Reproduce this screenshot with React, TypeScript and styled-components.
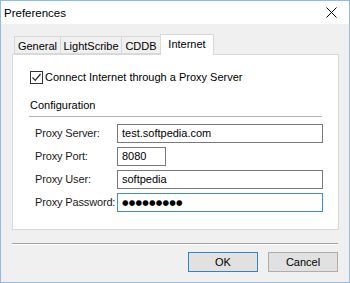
import styled, { createGlobalStyle } from "styled-components";

const GlobalStyle = createGlobalStyle`
    html, body {
        margin: 0;
        padding: 0;
        background: #f0f0f0;
    }
    * {
        box-sizing: border-box;
    }
`

const Window = styled.div`
    width: 350px;
    height: 283px;
    border: 1px solid #8fbde8;
    background-color: #f0f0f0;
    font-family: "Liberation Sans", Arial, sans-serif;
    font-size: 11px;
    color: #000;
    display: flex;
    flex-direction: column;
`

const TitleBar = styled.div`
    height: 23px;
    background-color: #fff;
    display: flex;
    align-items: center;
    padding: 0 0 0 3px;
    font-size: 11.5px;
`

const Title = styled.span`
    flex: 1;
`

const CloseButton = styled.div`
    width: 36px;
    height: 23px;
    display: flex;
    align-items: center;
    justify-content: center;
`

const Body = styled.div`
    flex: 1;
    padding: 10px 11px 0 11px;
    display: flex;
    flex-direction: column;
`

const TabRow = styled.div`
    display: flex;
    align-items: flex-end;
    height: 20px;
    padding-left: 3px;
    position: relative;
    z-index: 1;
`

const Tab = styled.div<{ $active?: boolean; $width: number }>`
    width: ${p => p.$width}px;
    height: ${p => p.$active ? "21px" : "18px"};
    margin-bottom: ${p => p.$active ? "-1px" : "0"};
    border: 1px solid #d9d9d9;
    border-bottom: ${p => p.$active ? "none" : "1px solid #d9d9d9"};
    margin-left: -1px;
    background-color: ${p => p.$active ? "#fff" : "#f0f0f0"};
    display: flex;
    align-items: center;
    justify-content: center;
    padding-top: ${p => p.$active ? "0" : "1px"};
    padding-bottom: ${p => p.$active ? "3px" : "0"};
    white-space: nowrap;
`

const Panel = styled.div`
    width: 327px;
    height: 176px;
    background-color: #fff;
    border: 1px solid #d9d9d9;
    padding: 15px 0 0 17px;
`

const CheckRow = styled.label`
    display: flex;
    align-items: center;
    gap: 2px;
    height: 14px;
`

const CheckBox = styled.span`
    width: 13px;
    height: 13px;
    border: 1px solid #333;
    background: #fff;
    display: flex;
    align-items: center;
    justify-content: center;
`

const GroupTitle = styled.div`
    margin-top: 12px;
    height: 17px;
    display: flex;
    align-items: center;
`

const GroupLine = styled.div`
    width: 293px;
    height: 1px;
    background-color: #b4b4b4;
    margin-top: 3px;
    margin-bottom: 7px;
    margin-left: -1px;
`

const FieldList = styled.div`
    display: flex;
    flex-direction: column;
    gap: 5px;
    padding-left: 5px;
`

const FieldRow = styled.div`
    display: flex;
    align-items: center;
    height: 18px;
`

const Label = styled.span`
    width: 82px;
    color: #1a1a1a;
    white-space: nowrap;
    letter-spacing: -0.15px;
`

const TextBox = styled.div<{ $width: number; $focused?: boolean }>`
    width: ${p => p.$width}px;
    height: 19px;
    border: 1px solid ${p => p.$focused ? "#3d8fd9" : "#7a7a7a"};
    padding: 0 4px;
    display: flex;
    align-items: center;
    background: #fff;
    white-space: nowrap;
`

const Dots = styled.span`
    font-size: 7.5px;
    letter-spacing: 0.2px;
    font-family: "DejaVu Sans", sans-serif;
`

const Separator = styled.div`
    margin-top: 13px;
    width: 326px;
    height: 1px;
    background-color: #a0a0a0;
    box-shadow: 0 1px 0 #fff;
`

const ButtonRow = styled.div`
    display: flex;
    justify-content: flex-end;
    gap: 10px;
    margin-top: 8px;
    padding-right: 0;
`

const Button = styled.div<{ $default?: boolean }>`
    width: 70px;
    height: 20px;
    border: 1px solid ${p => p.$default ? "#3c7fb1" : "#adadad"};
    box-shadow: ${p => p.$default ? "inset 0 0 0 1px #d6e6f5" : "none"};
    background-color: #e1e1e1;
    display: flex;
    align-items: center;
    justify-content: center;
`

export default function App() {
    return <>
        <GlobalStyle />
        <Window>
            <TitleBar>
                <Title>Preferences</Title>
                <CloseButton>
                    <svg width="11" height="11" viewBox="0 0 11 11">
                        <path d="M0.5 0.5 L10.5 10.5 M10.5 0.5 L0.5 10.5" stroke="#000" strokeWidth="1" />
                    </svg>
                </CloseButton>
            </TitleBar>
            <Body>
                <TabRow>
                    <Tab $width={47}>General</Tab>
                    <Tab $width={62}>LightScribe</Tab>
                    <Tab $width={40}>CDDB</Tab>
                    <Tab $width={54} $active>Internet</Tab>
                </TabRow>
                <Panel>
                    <CheckRow>
                        <CheckBox>
                            <svg width="11" height="11" viewBox="0 0 11 11">
                                <path d="M1.5 5.5 L4.2 8.3 L9.5 2" fill="none" stroke="#222" strokeWidth="1.2" />
                            </svg>
                        </CheckBox>
                        Connect Internet through a Proxy Server
                    </CheckRow>
                    <GroupTitle>Configuration</GroupTitle>
                    <GroupLine />
                    <FieldList>
                        <FieldRow>
                            <Label>Proxy Server:</Label>
                            <TextBox $width={206}>test.softpedia.com</TextBox>
                        </FieldRow>
                        <FieldRow>
                            <Label>Proxy Port:</Label>
                            <TextBox $width={49}>8080</TextBox>
                        </FieldRow>
                        <FieldRow>
                            <Label>Proxy User:</Label>
                            <TextBox $width={206}>softpedia</TextBox>
                        </FieldRow>
                        <FieldRow>
                            <Label>Proxy Password:</Label>
                            <TextBox $width={206} $focused><Dots>●●●●●●●●●</Dots></TextBox>
                        </FieldRow>
                    </FieldList>
                </Panel>
                <Separator />
                <ButtonRow>
                    <Button $default>OK</Button>
                    <Button>Cancel</Button>
                </ButtonRow>
            </Body>
        </Window>
    </>;
}
